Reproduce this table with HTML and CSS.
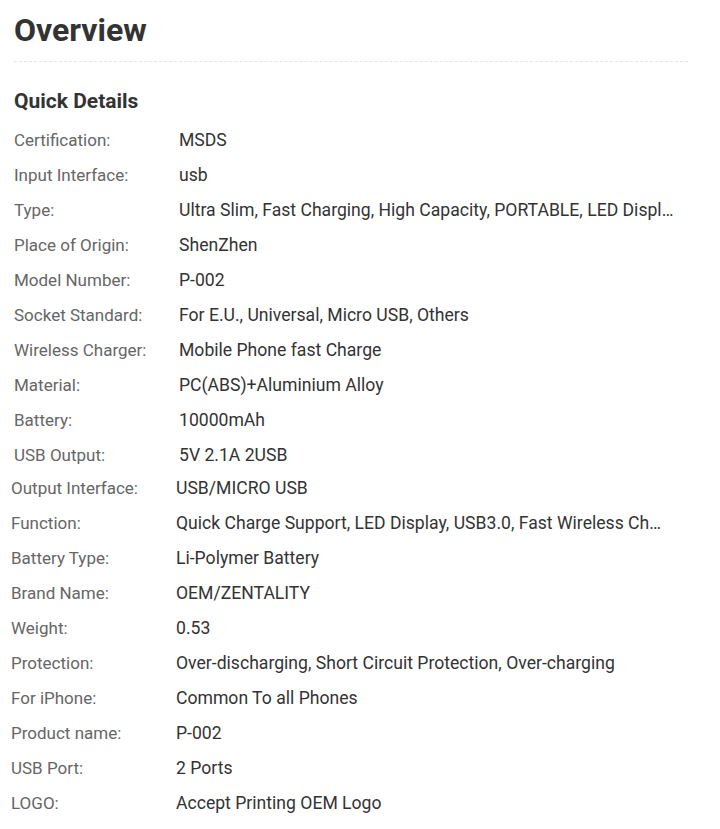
FILE: index.html
```html
<!DOCTYPE html>
<html lang="en">
<head>
<meta charset="utf-8">
<title>Overview</title>
<link rel="stylesheet" href="styles.css">
</head>
<body>
<div class="page">
  <h1 class="title">Overview</h1>
  <h2 class="subtitle">Quick Details</h2>
  <div class="group group-a">
    <div class="row"><span class="label">Certification:</span><span class="value">MSDS</span></div>
    <div class="row"><span class="label">Input Interface:</span><span class="value">usb</span></div>
    <div class="row"><span class="label">Type:</span><span class="value">Ultra Slim, Fast Charging, High Capacity, PORTABLE, LED Display, Wireless Charging</span></div>
    <div class="row"><span class="label">Place of Origin:</span><span class="value">ShenZhen</span></div>
    <div class="row"><span class="label">Model Number:</span><span class="value">P-002</span></div>
    <div class="row"><span class="label">Socket Standard:</span><span class="value">For E.U., Universal, Micro USB, Others</span></div>
    <div class="row"><span class="label">Wireless Charger:</span><span class="value">Mobile Phone fast Charge</span></div>
    <div class="row"><span class="label">Material:</span><span class="value">PC(ABS)+Aluminium Alloy</span></div>
    <div class="row"><span class="label">Battery:</span><span class="value">10000mAh</span></div>
    <div class="row"><span class="label">USB Output:</span><span class="value">5V 2.1A 2USB</span></div>
  </div>
  <div class="group group-b">
    <div class="row"><span class="label">Output Interface:</span><span class="value">USB/MICRO USB</span></div>
    <div class="row"><span class="label">Function:</span><span class="value">Quick Charge Support, LED Display, USB3.0, Fast Wireless Charging</span></div>
    <div class="row"><span class="label">Battery Type:</span><span class="value">Li-Polymer Battery</span></div>
    <div class="row"><span class="label">Brand Name:</span><span class="value">OEM/ZENTALITY</span></div>
    <div class="row"><span class="label">Weight:</span><span class="value">0.53</span></div>
    <div class="row"><span class="label">Protection:</span><span class="value">Over-discharging, Short Circuit Protection, Over-charging</span></div>
    <div class="row"><span class="label">For iPhone:</span><span class="value">Common To all Phones</span></div>
    <div class="row"><span class="label">Product name:</span><span class="value">P-002</span></div>
    <div class="row"><span class="label">USB Port:</span><span class="value">2 Ports</span></div>
    <div class="row"><span class="label">LOGO:</span><span class="value">Accept Printing OEM Logo</span></div>
  </div>
</div>
</body>
</html>
```
FILE: styles.css
```css
html, body {
  margin: 0;
  padding: 0;
  background: #fff;
}
body {
  font-family: Roboto, "Liberation Sans", Arial, sans-serif;
  color: #333;
}
.page {
  padding: 10px 0 0 14px;
  width: 674px;
}
.title {
  margin: 0;
  font-size: 32px;
  font-weight: 700;
  line-height: 40px;
  color: #333;
  padding-bottom: 11px;
  border-bottom: 1px dashed #e5e5e5;
}
.subtitle {
  margin: 24px 0 6px;
  font-size: 21px;
  font-weight: 700;
  line-height: 30px;
  color: #333;
}
.group {
  display: flex;
  flex-direction: column;
}
.group-b {
  margin-left: -3px;
  margin-top: -2px;
}
.row {
  display: flex;
  height: 35px;
  align-items: center;
  font-size: 17px;
}
.label {
  flex: 0 0 165px;
  color: #666;
  white-space: nowrap;
}
.value {
  width: 497px;
  font-size: 17.6px;
  color: #333;
  white-space: nowrap;
  overflow: hidden;
  text-overflow: ellipsis;
}
.group-b .value {
  width: 490px;
}
```
